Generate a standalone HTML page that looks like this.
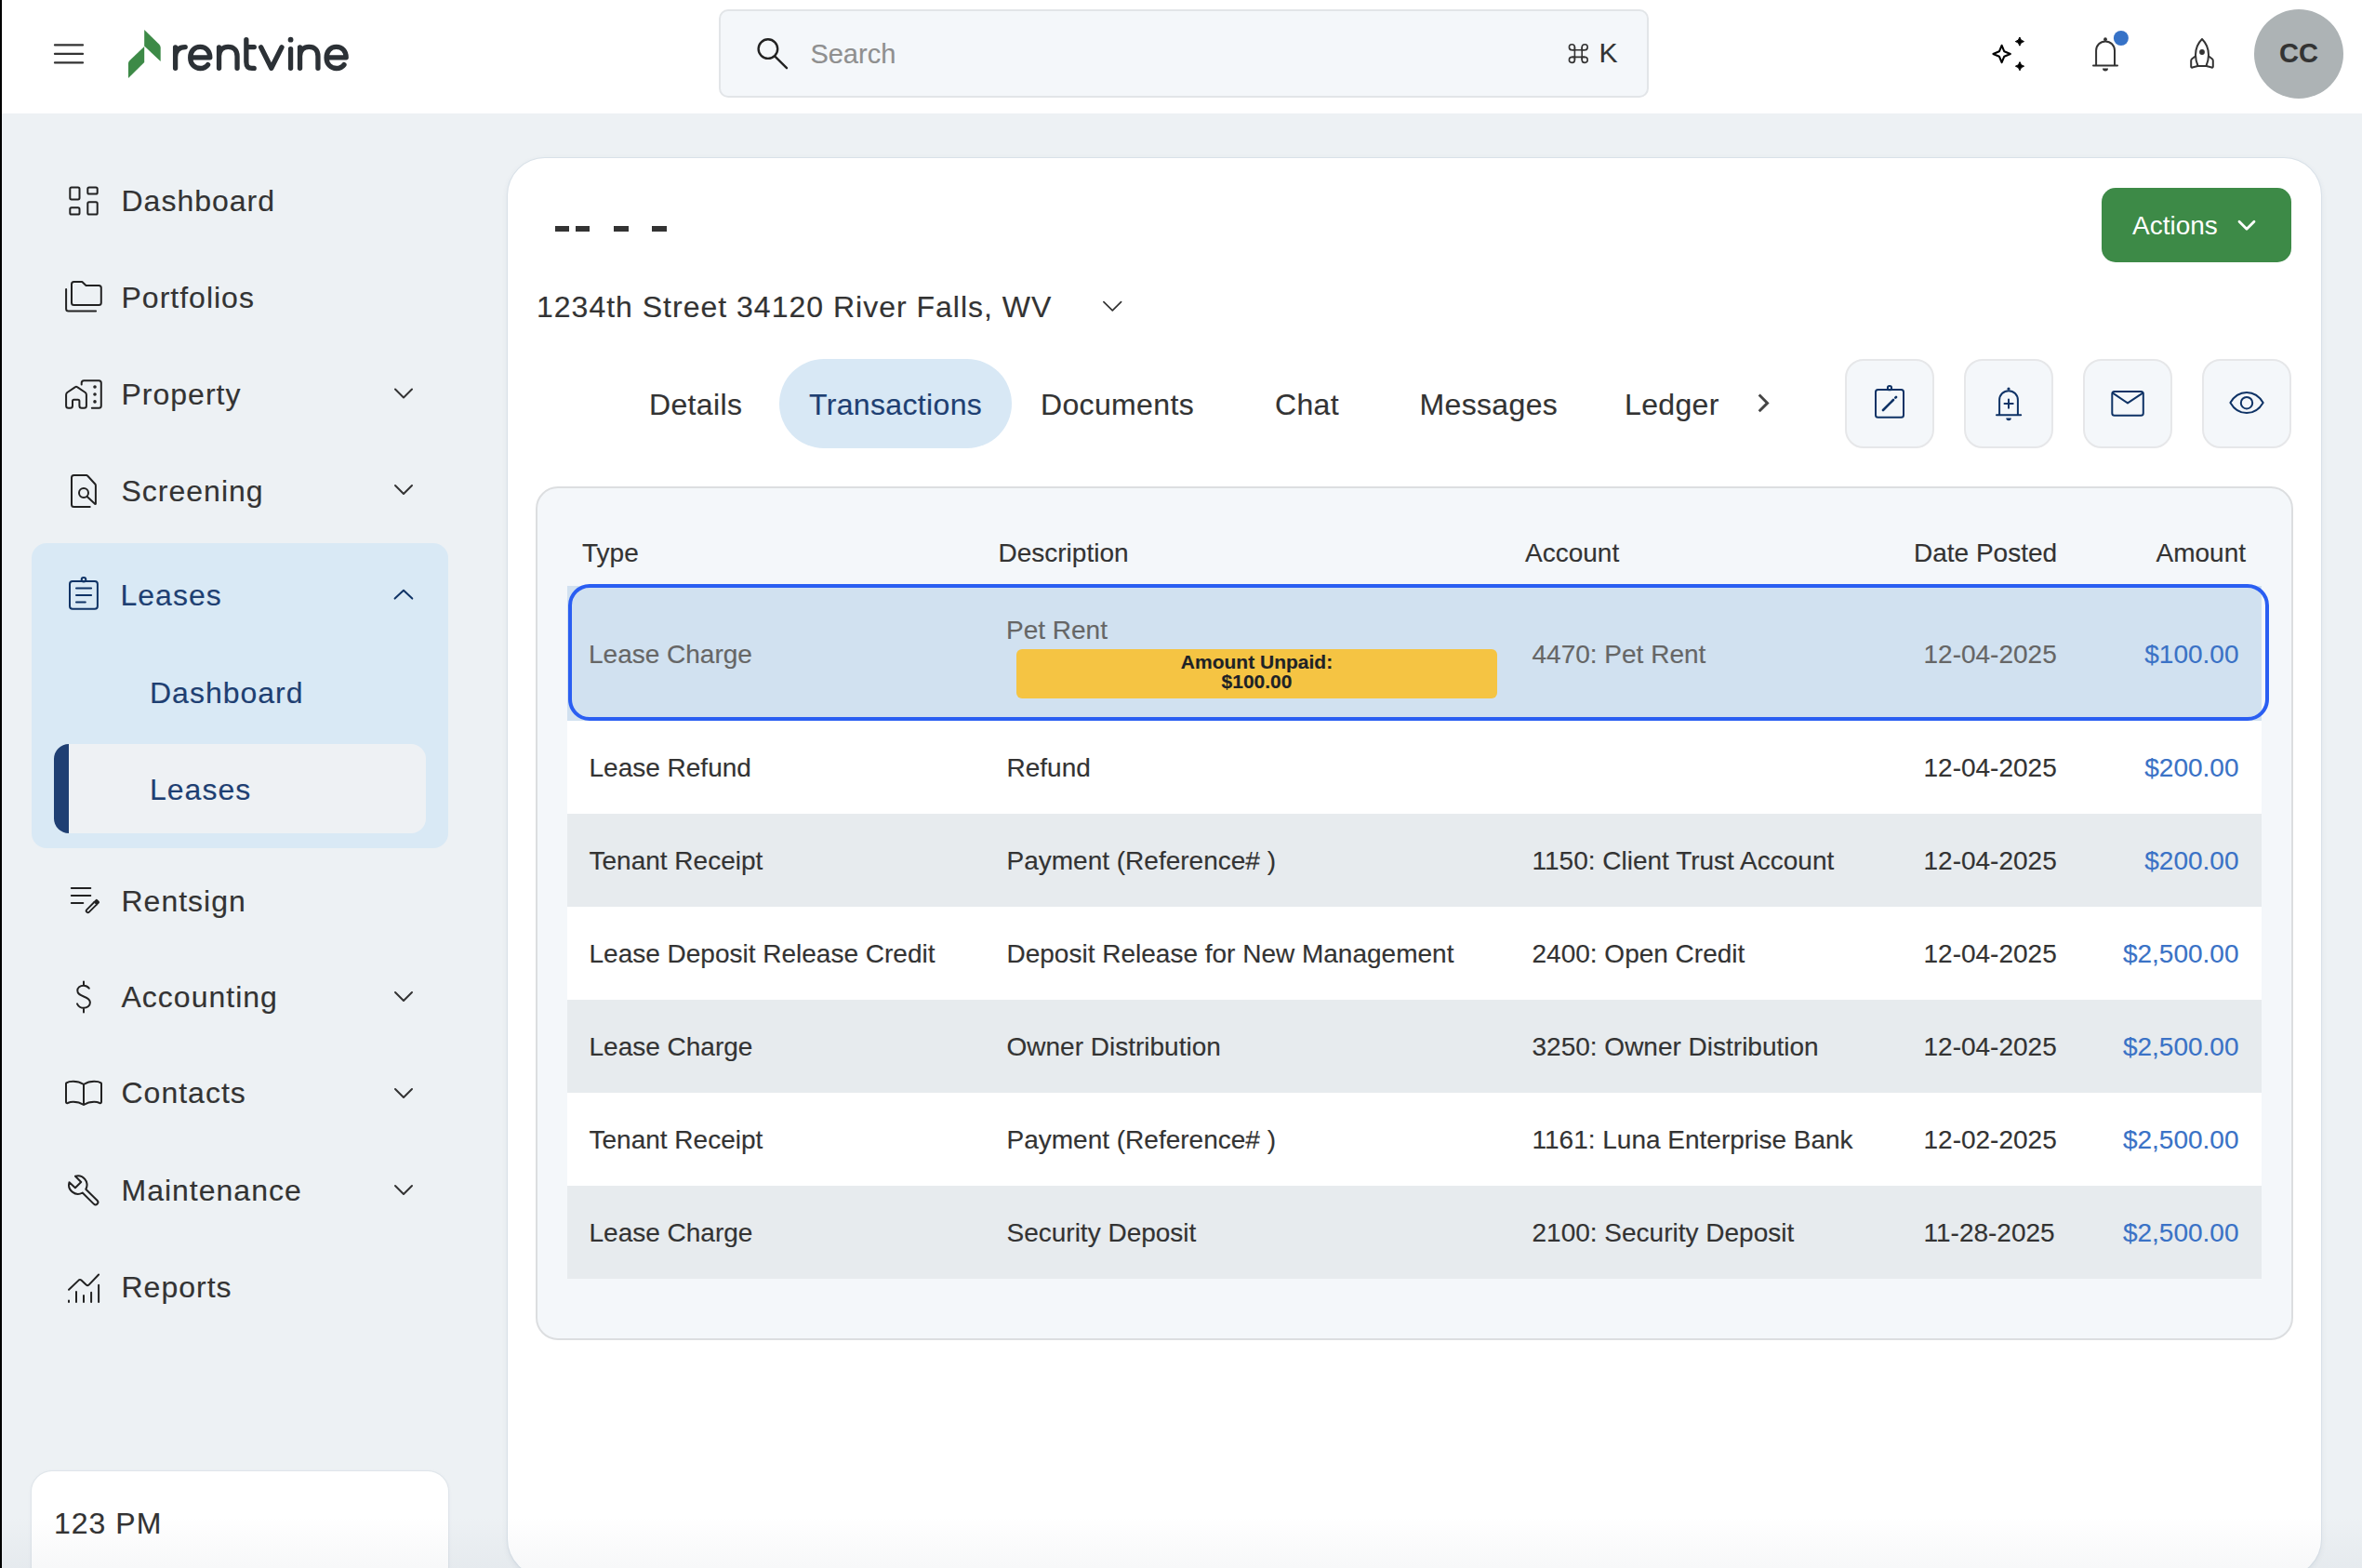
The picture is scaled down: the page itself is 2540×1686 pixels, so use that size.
<!DOCTYPE html>
<html><head><meta charset="utf-8">
<style>
*{box-sizing:border-box;margin:0;padding:0}
html,body{width:2540px;height:1686px;overflow:hidden}
body{position:relative;background:#edf1f4;font-family:"Liberation Sans",sans-serif;color:#333}
.a{position:absolute}
.t{position:absolute;white-space:nowrap;line-height:1;-webkit-text-stroke:0.15px currentColor}
svg.s{position:absolute;left:0;top:0;overflow:visible}
.side{font-size:32px;color:#333}
.navy{color:#1e3f72}
.st{fill:none;stroke:#222;stroke-width:2;stroke-linecap:round;stroke-linejoin:round}
.nv{fill:none;stroke:#0f3366;stroke-width:2;stroke-linecap:round;stroke-linejoin:round}
.tab{font-size:32px;color:#333}
.ib{width:96px;height:96px;top:386px;background:#f4f7fa;border:2px solid #e6e7e9;border-radius:20px}
.th{font-size:28px;color:#333}

</style></head><body>
<div class="a" style="left:0;top:0;width:2540px;height:122px;background:#fff"></div>
<div class="a" style="left:0;top:0;width:2px;height:1686px;background:#000;z-index:10"></div>

<!-- hamburger -->
<svg class="s" width="1" height="1"><path d="M59 48.4H89M59 57.9H89M59 67.4H89" style="fill:none;stroke:#333;stroke-width:2.3;stroke-linecap:round"/></svg>

<!-- logo mark -->
<svg class="s" width="1" height="1"><path d="M155.2 32 L171 47.5 Q172.7 49.2 172.7 51.5 L172.7 66.1 L155.2 49.6 Z" fill="#3d8a47"/><path d="M155.2 50 L155.2 67 L138 84 L138 68 Q138 66.5 139.5 65 Z" fill="#3d8a47"/></svg>
<!-- logo wordmark -->
<svg class="s" width="1" height="1"><g style="fill:none;stroke:#2c3136;stroke-width:5.3;stroke-linecap:round;stroke-linejoin:round">
<path d="M188.6 73.3V50.8M188.6 61C189 54 192.5 50.6 199.2 50.6"/>
<path d="M204.8 61.8H225.8C225.8 55 221.5 50.4 215.3 50.4C209 50.4 204.7 55.2 204.7 61.9C204.7 68.6 209 73.5 215.4 73.5C219.2 73.5 222 71.8 223.6 69.6"/>
<path d="M235.55 73.3V50.8M235.55 60C236 53.5 240 50.4 245.3 50.4C251.5 50.4 255.05 54 255.05 60.5V73.3"/>
<path d="M264.85 42.6V66.5C264.85 71.5 266.8 73.4 271 73.4H273.2M264.85 50.6H273.3"/>
<path d="M280.6 50.8L291.8 73.3L303 50.8"/>
<path d="M312.55 52.6V73.3"/>
<path d="M322.55 73.3V50.8M322.55 60C323 53.5 327 50.4 332.3 50.4C338.5 50.4 341.95 54 341.95 60.5V73.3"/>
<path d="M351.2 61.8H372.2C372.2 55 367.9 50.4 361.7 50.4C355.4 50.4 351.1 55.2 351.1 61.9C351.1 68.6 355.4 73.5 361.8 73.5C365.6 73.5 368.4 71.8 370 69.6"/>
</g><circle cx="312.55" cy="42.7" r="2.9" fill="#2c3136"/></svg>

<!-- search -->
<div class="a" style="left:773px;top:10px;width:1000px;height:95px;background:#f4f7fa;border:2px solid #e2e5e8;border-radius:10px"></div>
<svg class="s" width="1" height="1"><circle cx="825.9" cy="52.6" r="10.3" style="fill:none;stroke:#222;stroke-width:2.4"/><path d="M833.6 60.8L846 73.2" style="fill:none;stroke:#222;stroke-width:2.4;stroke-linecap:round"/></svg>
<div id="search" class="t" style="left:871.4px;top:44px;font-size:29px;color:#8f8f8f">Search</div>
<svg class="s" width="1" height="1"><g style="fill:none;stroke:#333;stroke-width:1.6">
<path d="M1693.4 50.6V64.6M1701.2 50.6V64.6M1690.4 53.8H1704.2M1690.4 61.4H1704.2"/>
<path d="M1693.4 53.8V50.6A3 3 0 1 0 1690.4 53.8ZM1701.2 53.8V50.6A3 3 0 1 1 1704.2 53.8ZM1693.4 61.4V64.6A3 3 0 1 1 1690.4 61.4ZM1701.2 61.4V64.6A3 3 0 1 0 1704.2 61.4Z"/>
</g></svg>
<div id="cmdk" class="t" style="left:1719.5px;top:42px;font-size:30px;color:#333">K</div>

<!-- right icons -->
<svg class="s" width="1" height="1">
<path d="M2152.6 48.8L2155.3 55.3L2161.8 58L2155.3 60.7L2152.6 67.2L2149.9 60.7L2143.4 58L2149.9 55.3Z" style="fill:none;stroke:#000;stroke-width:2.1;stroke-linejoin:round"/>
<path d="M2171.9 40Q2172.7 44 2176.5 44.6Q2172.7 45.3 2171.9 49.2Q2171.1 45.3 2167.3 44.6Q2171.1 44 2171.9 40Z" style="fill:#000;stroke:#000;stroke-width:1;stroke-linejoin:round"/>
<path d="M2172 66.6Q2172.8 70.6 2176.6 71.2Q2172.8 71.9 2172 75.8Q2171.2 71.9 2167.4 71.2Q2171.2 70.6 2172 66.6Z" style="fill:#000;stroke:#000;stroke-width:1;stroke-linejoin:round"/>
<g style="fill:none;stroke:#333;stroke-width:2;stroke-linecap:round;stroke-linejoin:round">
<path d="M2254.1 70.4V54.3A9.95 9.95 0 0 1 2274 54.3V70.4M2251 70.5H2277"/>
<path d="M2368 42C2364 46 2361 52 2361 59C2361 64 2362.3 68 2363.6 71H2372.4C2373.7 68 2375 64 2375 59C2375 52 2372 46 2368 42Z"/>
<path d="M2360.8 60.5L2357.2 63.2Q2356.2 64 2356.2 65.2V71.6Q2356.2 73 2357.6 72.5L2363.3 71M2375.2 60.5L2378.8 63.2Q2379.8 64 2379.8 65.2V71.6Q2379.8 73 2378.4 72.5L2372.7 71"/>
</g>
<circle cx="2264" cy="42.2" r="1.9" fill="#333"/>
<path d="M2261 73.4A3 3 0 0 0 2267 73.4Z" fill="#333"/>
<circle cx="2280.9" cy="41" r="8" fill="#3672c7"/>
<circle cx="2368" cy="56" r="2.9" fill="#333"/>
</svg>
<div class="a" style="left:2424px;top:10px;width:96px;height:96px;border-radius:50%;background:#adb3b5"></div>
<div id="cctext" class="t" style="left:2451px;top:43px;font-size:29px;font-weight:bold;color:#333">CC</div>

<!-- sidebar -->
<div id="s1" class="t side" style="left:130.5px;top:200px;letter-spacing:1px">Dashboard</div>
<div id="s2" class="t side" style="left:130.5px;top:304px;letter-spacing:1px">Portfolios</div>
<div id="s3" class="t side" style="left:130.5px;top:408px;letter-spacing:1px">Property</div>
<div id="s4" class="t side" style="left:130.5px;top:512px;letter-spacing:1px">Screening</div>

<div class="a" style="left:34px;top:584px;width:448px;height:328px;background:#d9e9f5;border-radius:16px"></div>
<div class="a" style="left:58px;top:800px;width:400px;height:96px;background:#eef1f4;border-radius:16px;overflow:hidden"><div class="a" style="left:0;top:0;width:16px;height:96px;background:#1f3f73"></div></div>
<div id="s5" class="t side navy" style="left:129.5px;top:624px;letter-spacing:1px">Leases</div>
<div id="s6" class="t side navy" style="left:161px;top:728.5px;letter-spacing:1px">Dashboard</div>
<div id="s7" class="t side navy" style="left:161px;top:832.7px;letter-spacing:1px">Leases</div>

<div id="s8" class="t side" style="left:130.5px;top:952.7px;letter-spacing:1px">Rentsign</div>
<div id="s9" class="t side" style="left:130.5px;top:1055.5px;letter-spacing:1px">Accounting</div>
<div id="s10" class="t side" style="left:130.5px;top:1159.4px;letter-spacing:1px">Contacts</div>
<div id="s11" class="t side" style="left:130.5px;top:1263.8px;letter-spacing:1px">Maintenance</div>
<div id="s12" class="t side" style="left:130.5px;top:1368.3px;letter-spacing:1px">Reports</div>

<!-- sidebar icons -->
<svg class="s" width="1" height="1">
<g class="st">
<rect x="75.3" y="201.4" width="10.2" height="13" rx="1.6"/>
<rect x="94.3" y="201.4" width="10.4" height="7.2" rx="1.6"/>
<rect x="75.3" y="223.3" width="10.2" height="7.2" rx="1.6"/>
<rect x="94.3" y="217.2" width="10.4" height="13.3" rx="1.6"/>
<path d="M79.5 303H88.3L92.5 307H106.3Q108.8 307 108.8 309.5V325.6Q108.8 328.1 106.3 328.1H79.5Q77 328.1 77 325.6V305.5Q77 303 79.5 303Z"/>
<path d="M71.1 310.9V331.9Q71.1 334.4 73.6 334.4H103.1"/>
<path d="M71.1 424.5Q71.1 423 72.3 422L81 416.2Q82 415.5 83 416.2L91.7 422Q92.9 423 92.9 424.5V436.3Q92.9 438.8 90.4 438.8H87.9Q85.4 438.8 85.4 436.3V431.3Q85.4 429.8 83.9 429.8H79.5Q78 429.8 78 431.3V436.3Q78 438.8 75.5 438.8H73.6Q71.1 438.8 71.1 436.3Z"/>
<path d="M87.7 413.4V411.7Q87.7 409.2 90.2 409.2H106.3Q108.8 409.2 108.8 411.7V436.3Q108.8 438.8 106.3 438.8H98.8"/>
<circle cx="102" cy="416" r="0.8"/><circle cx="102" cy="424" r="0.8"/><circle cx="102" cy="431.9" r="0.8"/>
<path d="M96.7 545H79.5Q77 545 77 542.5V513.6Q77 511.1 79.5 511.1H93Q93.7 511.1 94.3 511.8L102.3 520.5Q102.9 521.2 102.9 522V541.7"/>
<circle cx="90" cy="530" r="5"/>
<path d="M93.7 534.1L102.3 541.9"/>
<path d="M76.8 955H97.3M76.8 963H97.3M76.8 970.9H89.3"/>
<path d="M90 1055.4V1059.6M90 1084.7V1088.5M95.8 1062.7C94 1060.5 92 1059.8 90 1059.8C86 1059.8 83.3 1062 83.3 1065.3C83.3 1069 86.5 1070.2 90 1071.5C94 1073 96.9 1074.5 96.9 1078C96.9 1081.5 93.5 1083.8 90 1083.8C87 1083.8 84.5 1082.5 83 1079.3"/>
<path d="M90 1166C86 1163.5 82 1162.8 78.8 1162.8C75.5 1162.8 73 1163.3 71.5 1164.3Q71 1164.8 71 1165.5V1184.8Q71 1186.6 72.8 1186C74.5 1185.3 76.5 1184.8 78.8 1184.8C82 1184.8 86 1185.5 90 1188C94 1185.5 98 1184.8 101.2 1184.8C103.5 1184.8 105.5 1185.3 107.2 1186Q109 1186.6 109 1184.8V1165.5Q109 1164.8 108.5 1164.3C107 1163.3 104.5 1162.8 101.2 1162.8C98 1162.8 94 1163.5 90 1166V1188"/>
<path d="M81 1264.7L87.2 1271L80.9 1277.2L74.5 1271.2A9.8 9.8 0 0 0 88.7 1282.5L100.9 1294.6A2.6 2.6 0 0 0 104.5 1290.8L92.3 1278.7A9.8 9.8 0 0 0 81 1264.7Z"/>
<path d="M74 1386.8L84.6 1376.6Q86 1375.4 87.4 1376.6L92.7 1381.6Q94.1 1382.8 95.5 1381.6L106.1 1370.5M74 1398.5V1400M82 1388.9V1400M90 1392.9V1400M98.1 1389.8V1400M106.1 1381.8V1400"/>
</g>
<g transform="translate(99.95 974) rotate(-45)"><path d="M3.8 -1.8H-7.6A1.8 1.8 0 0 0 -7.6 1.8H3.8" style="fill:none;stroke:#222;stroke-width:1.9;stroke-linejoin:round"/><path d="M3.3 -2.75H6.6A1.6 1.6 0 0 1 8.2 -1.15V1.15A1.6 1.6 0 0 1 6.6 2.75H3.3Z" fill="#222"/></g>
<g class="nv">
<rect x="75" y="625" width="29.9" height="29.8" rx="3"/>
<circle cx="90" cy="623.3" r="2.3"/>
<path d="M82 632.5H98.1M82 640H98.1M82 647.4H91.8"/>
</g>
<g style="fill:none;stroke:#333;stroke-width:2;stroke-linecap:round;stroke-linejoin:round">
<path d="M425 418.5L434 427.5L443 418.5"/>
<path d="M425 522L434 531L443 522"/>
<path d="M425 1067L434 1076L443 1067"/>
<path d="M425 1171L434 1180L443 1171"/>
<path d="M425 1275L434 1284L443 1275"/>
</g>
<path d="M424.6 643.6L434 634.8L443.3 643.6" style="fill:none;stroke:#0f3366;stroke-width:2;stroke-linecap:round;stroke-linejoin:round"/>
</svg>

<div class="a" style="left:34px;top:1582px;width:448px;height:130px;background:#fff;border-radius:22px;box-shadow:0 0 0 1px #dfe5ea,0 1px 4px rgba(60,80,110,.08)"></div>
<div id="pm" class="t side" style="left:58px;top:1622.4px;letter-spacing:1px">123 PM</div>

<!-- main card -->
<div class="a" style="left:546px;top:170px;width:1950px;height:1525px;background:#fff;border-radius:40px;box-shadow:0 0 0 1px #d9e1e8,0 2px 6px rgba(60,80,110,.10)"></div>
<div class="a" style="left:597px;top:243.2px;width:15.2px;height:5.6px;background:#333"></div>
<div class="a" style="left:619.3px;top:243.2px;width:15.2px;height:5.6px;background:#333"></div>
<div class="a" style="left:660.2px;top:243.2px;width:15.6px;height:5.6px;background:#333"></div>
<div class="a" style="left:701.2px;top:243.2px;width:15.6px;height:5.6px;background:#333"></div>
<div id="addr" class="t" style="left:577px;top:314px;font-size:32px;letter-spacing:1px;color:#333">1234th Street 34120 River Falls, WV</div>
<svg class="s" width="1" height="1"><path d="M1186.9 324.6L1196.3 333.9L1205.6 324.6" style="fill:none;stroke:#333;stroke-width:1.7;stroke-linecap:round;stroke-linejoin:round"/></svg>

<div class="a" style="left:2260px;top:202px;width:204px;height:80px;background:#3d8a47;border-radius:15px"></div>
<div id="act" class="t" style="left:2293px;top:229px;font-size:28px;color:#fff;-webkit-text-stroke:0">Actions</div>
<svg class="s" width="1" height="1"><path d="M2408 238.2L2416 246.2L2424 238.2" style="fill:none;stroke:#fff;stroke-width:2.8;stroke-linecap:round;stroke-linejoin:round"/></svg>

<!-- tabs -->
<div class="a" style="left:838px;top:386px;width:250px;height:96px;background:#d8e8f5;border-radius:48px"></div>
<div id="tb1" class="t tab" style="left:698px;top:418.5px;letter-spacing:0.35px">Details</div>
<div id="tb2" class="t tab" style="color:#1e3f72;left:870px;top:418.5px;letter-spacing:0.35px">Transactions</div>
<div id="tb3" class="t tab" style="left:1119px;top:418.5px;letter-spacing:0.35px">Documents</div>
<div id="tb4" class="t tab" style="left:1371px;top:418.5px;letter-spacing:0.35px">Chat</div>
<div id="tb5" class="t tab" style="left:1526.5px;top:418.5px;letter-spacing:0.35px">Messages</div>
<div id="tb6" class="t tab" style="left:1747px;top:418.5px;letter-spacing:0.35px">Ledger</div>
<svg class="s" width="1" height="1"><path d="M1891.7 424.5L1900.6 433.4L1891.7 442.2" style="fill:none;stroke:#444;stroke-width:2.9;stroke-linejoin:miter"/></svg>

<div class="a ib" style="left:1984px"></div>
<div class="a ib" style="left:2112px"></div>
<div class="a ib" style="left:2240px"></div>
<div class="a ib" style="left:2368px"></div>
<svg class="s" width="1" height="1">
<g class="nv">
<rect x="2017" y="419" width="30" height="29.7" rx="2.5"/>
<circle cx="2032" cy="417.2" r="2.1"/>
<path d="M2150.1 446.3V430A9.9 9.9 0 0 1 2169.9 430V446.3M2147 446.3H2173.2M2160 429.5V438.7M2155.5 434H2164.7"/>
<rect x="2271.3" y="421" width="33.5" height="25.8" rx="2.5"/>
<path d="M2272 422.6L2288 433.4L2304.2 422.6"/>
<path d="M2398.4 433C2403 425 2409 421.9 2416 421.9C2423 421.9 2429 425 2433.7 433C2429 441 2423 444.1 2416 444.1C2409 444.1 2403 441 2398.4 433Z"/>
<circle cx="2416" cy="433.2" r="6.2"/>
</g>
<path d="M2025 441L2036 430M2038.3 427.7L2039 427" style="fill:none;stroke:#0f3366;stroke-width:2.6;stroke-linecap:round"/>
<circle cx="2160" cy="418" r="1.6" fill="#0f3366"/>
<path d="M2157.3 449.4A2.75 2.75 0 0 0 2162.8 449.4Z" fill="#0f3366"/>
</svg>

<!-- table -->
<div class="a" style="left:576px;top:523px;width:1890px;height:918px;background:#f4f7fa;border:2px solid #dcdee0;border-radius:24px"></div>
<div id="h1" class="t th" style="left:626px;top:581px">Type</div>
<div id="h2" class="t th" style="left:1073.5px;top:581px">Description</div>
<div id="h3" class="t th" style="left:1640px;top:581px">Account</div>
<div id="h4" class="t th" style="left:2058px;top:581px">Date Posted</div>
<div id="h5" class="t th" style="right:125px;top:581px">Amount</div>
<div class="a" style="left:610px;top:630px;width:1822px;height:145px;background:#d1e1f0"></div>
<div class="a" style="left:611px;top:628px;width:1829px;height:147px;border:4.8px solid #2a5ef2;border-radius:23px"></div>
<div id="r1c1" class="t" style="left:633px;top:690px;font-size:28px;color:#666">Lease Charge</div>
<div id="r1c2" class="t" style="left:1082px;top:664px;font-size:28px;color:#666">Pet Rent</div>
<div class="a" style="left:1093px;top:698px;width:517px;height:53px;background:#f5c443;border-radius:6px"></div>
<div id="badge" class="t" style="left:1093px;top:701px;width:517px;text-align:center;font-size:21px;line-height:21px;font-weight:bold;color:#1e2226">Amount Unpaid:<br>$100.00</div>
<div id="r1c3" class="t" style="left:1647.5px;top:690px;font-size:28px;color:#666">4470: Pet Rent</div>
<div id="r1c4" class="t" style="left:2068.5px;top:690px;font-size:28px;color:#666">12-04-2025</div>
<div id="r1c5" class="t" style="right:132.5px;top:690px;font-size:28px;color:#3a72c6">$100.00</div>
<div class="a" style="left:610px;top:775px;width:1822px;height:100px;background:#fff"></div>
<div id="r2c1" class="t" style="left:633.5px;top:812px;font-size:28px;">Lease Refund</div>
<div id="r2c2" class="t" style="left:1082.5px;top:812px;font-size:28px;">Refund</div>
<div id="r2c4" class="t" style="left:2068.5px;top:812px;font-size:28px;">12-04-2025</div>
<div id="r2c5" class="t" style="right:132.5px;top:812px;font-size:28px;color:#3a72c6">$200.00</div>
<div class="a" style="left:610px;top:875px;width:1822px;height:100px;background:#e7ebee"></div>
<div id="r3c1" class="t" style="left:633.5px;top:912px;font-size:28px;">Tenant Receipt</div>
<div id="r3c2" class="t" style="left:1082.5px;top:912px;font-size:28px;">Payment (Reference# )</div>
<div id="r3c3" class="t" style="left:1647.5px;top:912px;font-size:28px;">1150: Client Trust Account</div>
<div id="r3c4" class="t" style="left:2068.5px;top:912px;font-size:28px;">12-04-2025</div>
<div id="r3c5" class="t" style="right:132.5px;top:912px;font-size:28px;color:#3a72c6">$200.00</div>
<div class="a" style="left:610px;top:975px;width:1822px;height:100px;background:#fff"></div>
<div id="r4c1" class="t" style="left:633.5px;top:1012px;font-size:28px;">Lease Deposit Release Credit</div>
<div id="r4c2" class="t" style="left:1082.5px;top:1012px;font-size:28px;">Deposit Release for New Management</div>
<div id="r4c3" class="t" style="left:1647.5px;top:1012px;font-size:28px;">2400: Open Credit</div>
<div id="r4c4" class="t" style="left:2068.5px;top:1012px;font-size:28px;">12-04-2025</div>
<div id="r4c5" class="t" style="right:132.5px;top:1012px;font-size:28px;color:#3a72c6">$2,500.00</div>
<div class="a" style="left:610px;top:1075px;width:1822px;height:100px;background:#e7ebee"></div>
<div id="r5c1" class="t" style="left:633.5px;top:1112px;font-size:28px;">Lease Charge</div>
<div id="r5c2" class="t" style="left:1082.5px;top:1112px;font-size:28px;">Owner Distribution</div>
<div id="r5c3" class="t" style="left:1647.5px;top:1112px;font-size:28px;">3250: Owner Distribution</div>
<div id="r5c4" class="t" style="left:2068.5px;top:1112px;font-size:28px;">12-04-2025</div>
<div id="r5c5" class="t" style="right:132.5px;top:1112px;font-size:28px;color:#3a72c6">$2,500.00</div>
<div class="a" style="left:610px;top:1175px;width:1822px;height:100px;background:#fff"></div>
<div id="r6c1" class="t" style="left:633.5px;top:1212px;font-size:28px;">Tenant Receipt</div>
<div id="r6c2" class="t" style="left:1082.5px;top:1212px;font-size:28px;">Payment (Reference# )</div>
<div id="r6c3" class="t" style="left:1647.5px;top:1212px;font-size:28px;">1161: Luna Enterprise Bank</div>
<div id="r6c4" class="t" style="left:2068.5px;top:1212px;font-size:28px;">12-02-2025</div>
<div id="r6c5" class="t" style="right:132.5px;top:1212px;font-size:28px;color:#3a72c6">$2,500.00</div>
<div class="a" style="left:610px;top:1275px;width:1822px;height:100px;background:#e7ebee"></div>
<div id="r7c1" class="t" style="left:633.5px;top:1312px;font-size:28px;">Lease Charge</div>
<div id="r7c2" class="t" style="left:1082.5px;top:1312px;font-size:28px;">Security Deposit</div>
<div id="r7c3" class="t" style="left:1647.5px;top:1312px;font-size:28px;">2100: Security Deposit</div>
<div id="r7c4" class="t" style="left:2068.5px;top:1312px;font-size:28px;">11-28-2025</div>
<div id="r7c5" class="t" style="right:132.5px;top:1312px;font-size:28px;color:#3a72c6">$2,500.00</div>

<div class="a" style="left:0;top:1630px;width:2540px;height:56px;background:linear-gradient(rgba(30,50,80,0),rgba(30,50,80,.035));z-index:5"></div>
</body></html>
